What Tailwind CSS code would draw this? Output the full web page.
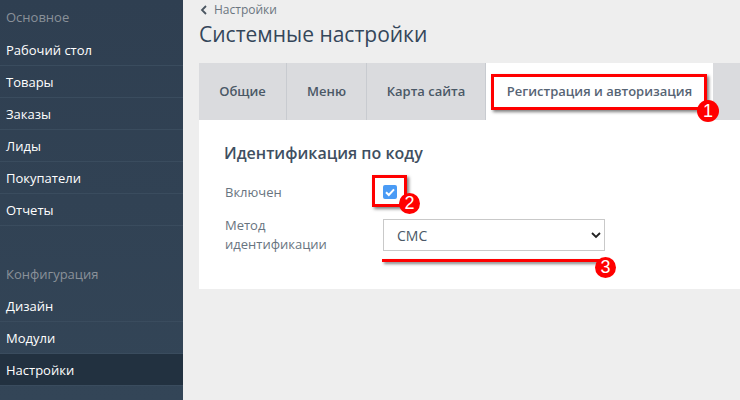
<!DOCTYPE html>
<html lang="ru">
<head>
    <meta charset="UTF-8">
    <title>Системные настройки</title>
    <script src="https://cdn.jsdelivr.net/npm/@tailwindcss/browser@4"></script>
</head>
<body class="overflow-hidden">
<div class="relative flex w-[740px] h-[400px] overflow-hidden bg-[#eeeeee] font-['Open_Sans',sans-serif]">
    <!-- sidebar -->
    <div class="w-[183px] h-[400px] shrink-0 bg-linear-to-b from-[#2f3f51] to-[#334557] text-[13px] font-normal text-white">
        <div class="h-[34px] pl-[6px] leading-[35px] text-[#8a9199]">Основное</div>
        <div class="h-[32px] pl-[6px] leading-[32px] border-b border-[#3a4c5e]">Рабочий стол</div>
        <div class="h-[32px] pl-[6px] leading-[32px] border-b border-[#3a4c5e]">Товары</div>
        <div class="h-[32px] pl-[6px] leading-[32px] border-b border-[#3a4c5e]">Заказы</div>
        <div class="h-[32px] pl-[6px] leading-[32px] border-b border-[#3a4c5e]">Лиды</div>
        <div class="h-[32px] pl-[6px] leading-[32px] border-b border-[#3a4c5e]">Покупатели</div>
        <div class="h-[32px] pl-[6px] leading-[32px] border-b border-[#3a4c5e]">Отчеты</div>
        <div class="h-[64px] pl-[6px] pt-[32px] leading-[32px] text-[#8a9199]">Конфигурация</div>
        <div class="h-[32px] pl-[6px] leading-[32px] border-b border-[#3a4c5e]">Дизайн</div>
        <div class="h-[32px] pl-[6px] leading-[32px] border-b border-[#3a4c5e]">Модули</div>
        <div class="h-[32px] pl-[6px] leading-[32px] border-b border-[#3a4c5e] bg-[#223140]">Настройки</div>
    </div>
    <!-- main -->
    <div class="flex-1 pl-[16px]">
        <div class="flex items-center h-[18px] pt-[1px] text-[12px] text-[#6b7580]">
            <svg class="w-[8px] h-[10px] ml-[1px] mr-[6px]" viewBox="0 0 8 10" fill="none" stroke="#4a5560" stroke-width="1.8"><path d="M6 1 2 5l4 4"/></svg>
            Настройки
        </div>
        <h1 class="h-[45px] text-[21px] leading-[32px] text-[#34465a]">Системные настройки</h1>
        <div class="flex h-[57px] bg-[#dadbde] text-[13px] font-semibold text-[#4a5866]">
            <div class="w-[88px] leading-[57px] text-center border-r border-[#c8cbd0]">Общие</div>
            <div class="w-[80px] leading-[57px] text-center border-r border-[#c8cbd0]">Меню</div>
            <div class="w-[119px] leading-[57px] text-center border-r border-[#c8cbd0]">Карта сайта</div>
            <div class="w-[227px] leading-[57px] text-center bg-white text-[#566474]">Регистрация и авторизация</div>
        </div>
        <div class="h-[169px] bg-white pl-[26px] pt-[22px]">
            <h2 class="-ml-[1px] text-[16px] leading-[22px] font-semibold text-[#3f4f61]">Идентификация по коду</h2>
            <div class="flex items-center mt-[16px] h-[24px] text-[13px] text-[#687480]">
                <div class="w-[158px] pt-[1px]">Включен</div>
                <div class="w-[14px] h-[14px] rounded-[2px] bg-[#4a9bf5] flex items-center justify-center">
                    <svg class="w-[10px] h-[10px]" viewBox="0 0 10 10" fill="none" stroke="white" stroke-width="2"><path d="M1 5.2 3.8 8 9 2.4"/></svg>
                </div>
            </div>
            <div class="flex mt-[15px] text-[13px] text-[#687480]">
                <div class="w-[158px] -mt-[3px] leading-[19px]">Метод<br>идентификации</div>
                <div class="flex items-center justify-between w-[222px] h-[32px] border border-[#c9c9c9] pl-[13px] pr-[3px] text-[14px] text-[#4a5866]">
                    СМС
                    <svg class="w-[10px] h-[7px]" viewBox="0 0 10 7" fill="none" stroke="#222" stroke-width="1.8"><path d="M1 1l4 4 4-4"/></svg>
                </div>
            </div>
        </div>
    </div>
    <!-- annotations -->
    <div class="absolute left-[491px] top-[74px] w-[216px] h-[36px] border-[3px] border-[#ff0000] shadow-[2px_2px_3px_rgba(0,0,0,0.5)]"></div>
    <div class="absolute left-[697px] top-[100px] w-[22px] h-[22px] rounded-full bg-[#ff0000] text-white text-[18px] leading-[22px] text-center font-['Liberation_Sans',sans-serif]">1</div>
    <div class="absolute left-[372px] top-[175px] w-[35px] h-[32px] border-[3px] border-[#ff0000] shadow-[2px_2px_3px_rgba(0,0,0,0.5)]"></div>
    <div class="absolute left-[399px] top-[193px] w-[21px] h-[21px] rounded-full bg-[#ff0000] text-white text-[18px] leading-[21px] text-center font-['Liberation_Sans',sans-serif]">2</div>
    <div class="absolute left-[382px] top-[259px] w-[220px] h-[3px] bg-[#ff0000] shadow-[2px_2px_3px_rgba(0,0,0,0.5)]"></div>
    <div class="absolute left-[595px] top-[257px] w-[21px] h-[21px] rounded-full bg-[#ff0000] text-white text-[18px] leading-[21px] text-center font-['Liberation_Sans',sans-serif]">3</div>
</div>
</body>
</html>
